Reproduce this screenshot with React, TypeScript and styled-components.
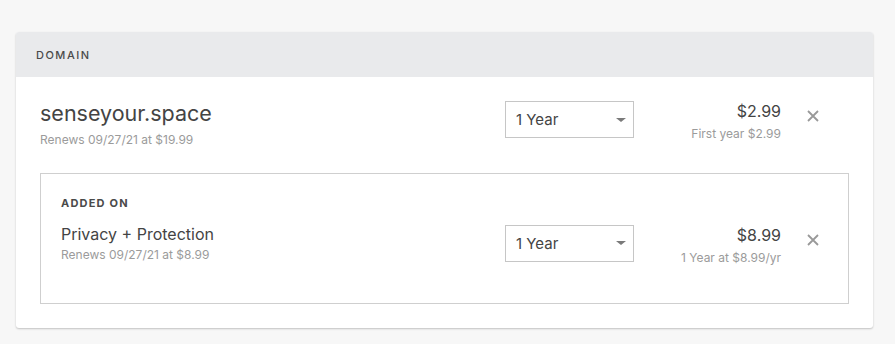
import React from 'react';
import styled, { createGlobalStyle } from 'styled-components';

const GlobalStyle = createGlobalStyle`
  html, body {
    margin: 0;
    padding: 0;
    background-color: #f7f7f7;
    font-family: Inter, 'Open Sans', sans-serif;
    color: #444;
  }
`;

const Page = styled.div`
  padding: 32px 22px 16px 16px;
`;

const Card = styled.section`
  background-color: #ffffff;
  border-radius: 3px;
  box-shadow: 0 1px 2px rgba(0, 0, 0, 0.22);
  overflow: hidden;
`;

const CardHeader = styled.header`
  height: 45px;
  display: flex;
  align-items: center;
  padding: 0 20px;
  background-color: #e9eaec;
  font-size: 11px;
  font-weight: 500;
  letter-spacing: 1.5px;
  color: #4a4a4a;
  text-transform: uppercase;
`;

const CardBody = styled.div`
  padding: 24px;
`;

const Row = styled.div<{ $padRight: number }>`
  display: flex;
  align-items: flex-start;
  padding-right: ${(p) => p.$padRight}px;
`;

const Info = styled.div`
  flex: 1;
  min-width: 0;
`;

const Title = styled.div<{ $size: number }>`
  font-size: ${(p) => p.$size}px;
  line-height: 1.2;
  color: #444;
`;

const Sub = styled.div<{ $gap?: number }>`
  font-size: 12px;
  line-height: 16px;
  color: #9b9b9b;
  margin-top: ${(p) => p.$gap ?? 3}px;
`;

const Dropdown = styled.div`
  flex: none;
  box-sizing: border-box;
  width: 129px;
  height: 37px;
  border: 1px solid #c6c6c6;
  display: flex;
  align-items: center;
  justify-content: space-between;
  padding: 0 7px 0 10px;
  font-size: 15px;
  color: #444;
  cursor: pointer;
`;

const Caret = styled.span`
  width: 0;
  height: 0;
  border-left: 5px solid transparent;
  border-right: 5px solid transparent;
  border-top: 4px solid #7a7a7a;
`;

const Price = styled.div`
  flex: none;
  width: 147px;
  text-align: right;
`;

const Amount = styled.div`
  font-size: 16px;
  line-height: 20px;
  color: #444;
`;

const Close = styled.button`
  flex: none;
  width: 12px;
  height: 12px;
  margin: 9px 0 0 26px;
  padding: 0;
  border: none;
  background: none;
  cursor: pointer;
  display: flex;
`;

const AddOnBox = styled.div`
  margin-top: 25px;
  border: 1px solid #cfcfcf;
  padding: 22px 0 37px 20px;
`;

const AddOnLabel = styled.div`
  font-size: 11px;
  line-height: 14px;
  font-weight: 700;
  letter-spacing: 1.2px;
  color: #4a4a4a;
  text-transform: uppercase;
  margin-bottom: 15px;
`;

const CloseIcon = () => (
  <svg width="12" height="12" viewBox="0 0 12 12">
    <path d="M1 1L11 11M11 1L1 11" stroke="#999" strokeWidth="1.8" />
  </svg>
);

interface LineProps {
  title: string;
  titleSize: number;
  subGap: number;
  renews: string;
  amount: string;
  note: string;
  padRight: number;
}

const LineItem: React.FC<LineProps> = ({ title, titleSize, subGap, renews, amount, note, padRight }) => (
  <Row $padRight={padRight}>
    <Info>
      <Title $size={titleSize}>{title}</Title>
      <Sub $gap={subGap}>{renews}</Sub>
    </Info>
    <Dropdown>
      <span>1 Year</span>
      <Caret />
    </Dropdown>
    <Price>
      <Amount>{amount}</Amount>
      <Sub $gap={5}>{note}</Sub>
    </Price>
    <Close aria-label="Remove">
      <CloseIcon />
    </Close>
  </Row>
);

export default function App() {
  return (
    <>
      <GlobalStyle />
      <Page>
        <Card>
          <CardHeader>Domain</CardHeader>
          <CardBody>
            <LineItem
              title="senseyour.space"
              titleSize={21.5}
              subGap={5}
              renews="Renews 09/27/21 at $19.99"
              amount="$2.99"
              note="First year $2.99"
              padRight={30}
            />
            <AddOnBox>
              <AddOnLabel>Added on</AddOnLabel>
              <LineItem
                title="Privacy + Protection"
                titleSize={16}
                subGap={3}
                renews="Renews 09/27/21 at $8.99"
                amount="$8.99"
                note="1 Year at $8.99/yr"
                padRight={29}
              />
            </AddOnBox>
          </CardBody>
        </Card>
      </Page>
    </>
  );
}
